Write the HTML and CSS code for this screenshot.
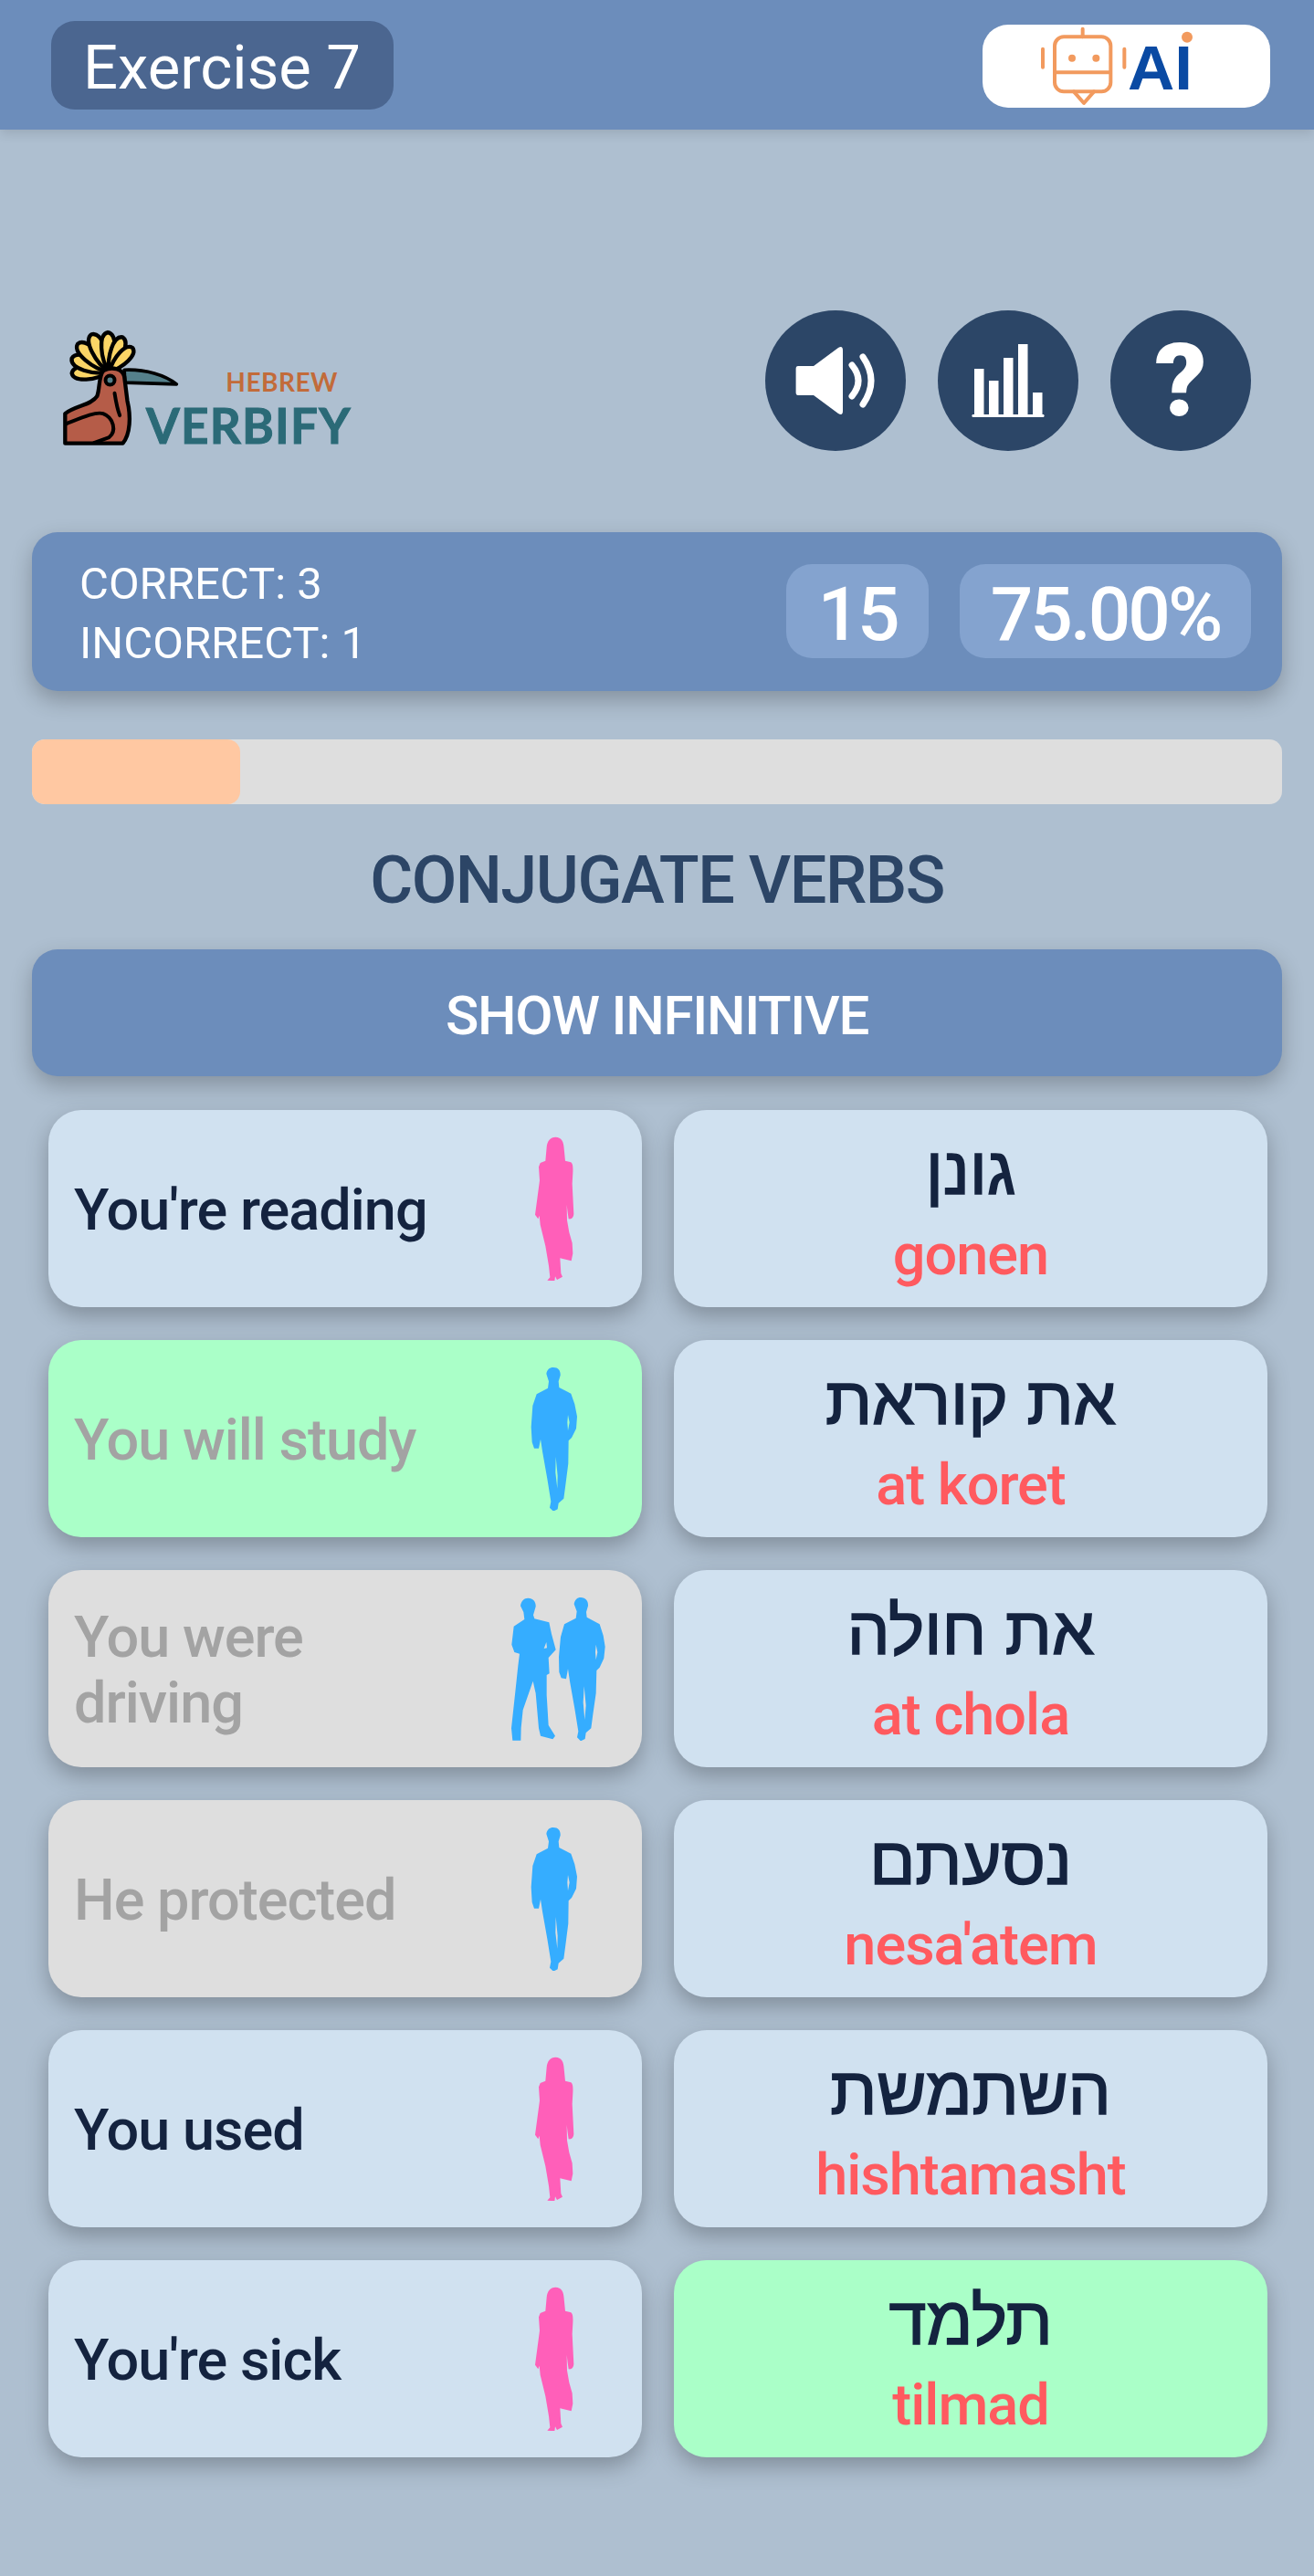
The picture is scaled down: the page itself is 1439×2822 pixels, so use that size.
FILE: index.html
```html
<!DOCTYPE html>
<html lang="en">
<head>
<meta charset="utf-8">
<title>Exercise 7</title>
<link rel="stylesheet" href="styles.css">
</head>
<body>
<svg class="defs" aria-hidden="true">
  <symbol id="woman" viewBox="96 105 360 474">
    <path d="M265 107C285 107 292 122 293 145L297 185L316 190C322 195 323 205 322 225L320 260L322 300L325 360C324 372 318 378 308 376L305 355L302 330L303 380L310 420L320 455L322 490L317 514L280 505L283 555L288 566L270 576L264 565L262 580L238 578L247 568L243 530L232 465L215 395L212 365L208 376L198 362L205 310L213 250L210 205L215 192L232 185L236 140C238 120 248 107 265 107Z"/>
  </symbol>
  <symbol id="man" viewBox="96 81 360 474">
    <path fill-rule="evenodd" d="M258 84C275 84 282 95 281 110L275 130L277 150L316 170L328 205L336 245L333 285L318 315L308 325L307 400L298 470L292 515L275 530L272 550L258 557L246 545L250 525L238 450L222 360L216 320L210 350L195 350L188 330L185 280L190 210L203 172L240 152L243 130L235 105C237 92 245 84 258 84ZM266 378L272 440L271 482L265 430ZM306 240L304 265L306 292L311 265Z"/>
  </symbol>
  <symbol id="men" viewBox="66 57 360 474">
    <path fill-rule="evenodd" d="M145 62C162 62 171 74 170 90L162 118L166 130L214 142L222 180L236 232L212 258L215 310L206 315L206 380L212 480L234 515L226 526L186 515L180 490L170 375L161 335L128 430L122 488L121 530L94 530L90 490L103 370L112 285L117 245L100 240L91 215L98 155L133 132L130 108L120 88C122 72 132 62 145 62ZM205 207L197 228L207 226Z"/>
    <path fill-rule="evenodd" d="M318 60C335 60 343 72 342 88L336 108L338 125L380 148L392 185L398 222L394 260L380 290L370 300L368 375L358 445L352 490L335 505L332 525L318 532L306 520L310 500L298 425L282 335L276 295L270 328L254 325L247 305L246 255L252 190L264 148L302 128L305 106L296 82C298 68 306 60 318 60ZM329 352L335 415L331 462L326 405ZM368 215L366 240L368 265L373 240Z"/>
  </symbol>
</svg>

<header class="topbar">
  <div class="exercise">Exercise 7</div>
  <div class="ai-pill">
    <svg class="ai-logo" viewBox="0 0 945 273" aria-label="AI">
      <g class="robot">
        <rect x="237" y="40" width="184" height="180" rx="30"/>
        <path d="M239 157H419M329 40V14M198 80V140M466 80V140M300 220L333 258L366 220"/>
      </g>
      <circle class="orange" cx="294" cy="110" r="12"/>
      <circle class="orange" cx="373" cy="110" r="12"/>
      <circle class="orange" cx="672" cy="41" r="18"/>
      <text class="ai-text" x="477" y="212" textLength="213" lengthAdjust="spacingAndGlyphs">AI</text>
    </svg>
  </div>
</header>

<section class="tools">
  <div class="logo">
    <svg class="bird" viewBox="85 95 385 385" aria-hidden="true">
      <g class="crest">
        <path transform="rotate(-92 240 235)" d="M240 235C212 190 210 118 240 112C270 118 268 190 240 235Z"/>
        <path transform="rotate(-70 240 235)" d="M240 235C212 190 206 110 240 104C274 110 268 190 240 235Z"/>
        <path transform="rotate(-48 240 235)" d="M240 235C212 190 206 102 240 96C274 102 268 190 240 235Z"/>
        <path transform="rotate(-25 240 235)" d="M240 235C212 190 206 104 240 98C274 104 268 190 240 235Z"/>
        <path transform="rotate(-2 240 235)" d="M240 235C212 190 208 110 240 104C272 110 268 190 240 235Z"/>
        <path transform="rotate(21 240 235)" d="M240 235C214 190 210 118 240 112C270 118 266 190 240 235Z"/>
        <path transform="rotate(44 240 235)" d="M240 235C216 190 212 130 240 124C268 130 264 190 240 235Z"/>
      </g>
      <path class="beak" d="M290 228C360 225 425 245 462 275L292 270Z"/>
      <path class="body" d="M222 230C250 215 285 225 290 250L300 330C312 380 310 440 285 470L95 470L95 372C130 345 180 345 200 315C210 290 205 245 222 230Z"/>
      <path class="wing" d="M100 405C150 385 195 365 220 372C255 385 265 430 240 450L190 468M258 305C262 330 268 360 275 378"/>
      <circle class="eye" cx="243" cy="262" r="15"/>
    </svg>
    <div class="wordmark">
      <div class="hebrew">HEBREW</div>
      <div class="verbify">VERBIFY</div>
    </div>
  </div>
  <div class="round-buttons">
    <button class="round">
      <svg viewBox="0 0 154 154" aria-label="Sound">
        <path class="solid" d="M36 61H53L80 41Q85 38 85 44V110Q85 116 80 113L53 93H36Q33.6 93 33.6 90V64Q33.6 61 36 61Z"/>
        <path class="waves" d="M95 60Q109 77 95 94M107 51Q125 77 107 103"/>
      </svg>
    </button>
    <button class="round">
      <svg viewBox="0 0 154 154" aria-label="Statistics">
        <path class="solid" d="M40 64H50.500V114H40ZM56 77H66.500V114H56ZM72 52H82.500V114H72ZM88 37H98.500V114H88ZM104 90H114.500V114H104ZM38 114H116Q117.500 115.500 116 117H38Q36.500 115.500 38 114Z"/>
      </svg>
    </button>
    <button class="round question">?</button>
  </div>
</section>

<section class="score">
  <div class="tally">
    <div>CORRECT: 3</div>
    <div>INCORRECT: 1</div>
  </div>
  <div class="stat stat-count">15</div>
  <div class="stat stat-percent">75.00%</div>
</section>

<div class="progress"><div class="progress-fill" style="width:16.67%"></div></div>

<h1 class="title">CONJUGATE VERBS</h1>

<button class="show">SHOW INFINITIVE</button>

<main class="grid">
  <div class="card"><span class="label">You're reading</span><svg class="figure woman"><use href="#woman"/></svg></div>
  <div class="card verb"><div class="he" dir="rtl" lang="he">גונן</div><div class="tr">gonen</div></div>

  <div class="card matched"><span class="label muted">You will study</span><svg class="figure man"><use href="#man"/></svg></div>
  <div class="card verb"><div class="he" dir="rtl" lang="he">את קוראת</div><div class="tr">at koret</div></div>

  <div class="card done"><span class="label muted">You were driving</span><svg class="figure man"><use href="#men"/></svg></div>
  <div class="card verb"><div class="he" dir="rtl" lang="he">את חולה</div><div class="tr">at chola</div></div>

  <div class="card done"><span class="label muted">He protected</span><svg class="figure man"><use href="#man"/></svg></div>
  <div class="card verb"><div class="he" dir="rtl" lang="he">נסעתם</div><div class="tr">nesa'atem</div></div>

  <div class="card"><span class="label">You used</span><svg class="figure woman"><use href="#woman"/></svg></div>
  <div class="card verb"><div class="he" dir="rtl" lang="he">השתמשת</div><div class="tr">hishtamasht</div></div>

  <div class="card"><span class="label">You're sick</span><svg class="figure woman"><use href="#woman"/></svg></div>
  <div class="card verb matched"><div class="he" dir="rtl" lang="he">תלמד</div><div class="tr">tilmad</div></div>
</main>
</body>
</html>
```
FILE: styles.css
```css
* { box-sizing: border-box; }
html, body { margin: 0; padding: 0; }
body {
  height: 2822px;
  background: #aebfd0;
  font-family: Roboto, "Liberation Sans", sans-serif;
  overflow: hidden;
}
.defs { width: 0; height: 0; display: block; }

.topbar {
  height: 142px;
  background: #6c8dbb;
  display: flex;
  align-items: center;
  justify-content: space-between;
  padding: 0 48px 0 56px;
  box-shadow: 0 4px 12px rgba(0, 0, 0, .12);
}
.exercise {
  width: 375px;
  height: 97px;
  margin-top: 1px;
  background: #4b6690;
  border-radius: 26px;
  color: #fff;
  font-size: 67px;
  line-height: 103px;
  padding-left: 35px;
  white-space: nowrap;
}
.ai-pill {
  width: 315px;
  height: 91px;
  margin-top: 3px;
  background: #fff;
  border-radius: 28px;
}
.ai-logo { width: 315px; height: 91px; display: block; }
.robot { fill: none; stroke: #f29a5e; stroke-width: 12; stroke-linecap: round; stroke-linejoin: round; }
.orange { fill: #f29a5e; }
.ai-text { font-family: "Liberation Sans", sans-serif; font-weight: 700; font-size: 204px; fill: #0a4aa3; }

.tools {
  margin-top: 198px;
  height: 154px;
  display: flex;
  justify-content: space-between;
  padding: 0 69px 0 68px;
}
.logo { display: flex; align-items: flex-start; position: relative; width: 320px; }
.bird { width: 128px; height: 128px; margin-top: 21px; flex: none; }
.crest path { fill: #fbd566; stroke: #000; stroke-width: 13; stroke-linejoin: round; }
.beak { fill: #55808b; stroke: #000; stroke-width: 11; stroke-linejoin: round; }
.body { fill: #b55c48; stroke: #000; stroke-width: 13; stroke-linejoin: round; }
.wing { fill: none; stroke: #000; stroke-width: 12; stroke-linecap: round; stroke-linejoin: round; }
.eye { fill: #55808b; stroke: #000; stroke-width: 12; }
.wordmark { margin-left: -36px; padding-top: 64px; width: 226px; font-family: Lato, sans-serif; }
.hebrew { color: #c26b3a; font-size: 28px; line-height: 28px; font-weight: 700; text-align: right; padding-right: 16px; letter-spacing: .5px; }
.verbify { color: #2b6a77; font-size: 53px; line-height: 50px; margin-top: 9px; font-weight: 700; letter-spacing: 1.2px; -webkit-text-stroke: 1px #2b6a77; white-space: nowrap; }
.round-buttons { display: flex; gap: 35px; }
.round {
  width: 154px;
  height: 154px;
  border: 0;
  padding: 0;
  border-radius: 50%;
  background: #2c4667;
  display: flex;
  align-items: center;
  justify-content: center;
  color: #fff;
}
.round svg { width: 154px; height: 154px; display: block; }
.solid { fill: #fff; }
.waves { fill: none; stroke: #fff; stroke-width: 7; stroke-linecap: round; }
.question { font-family: Roboto, sans-serif; font-weight: 900; font-size: 112px; line-height: 154px; }

.score {
  margin: 89px 35px 0;
  height: 174px;
  background: #6c8dbb;
  border-radius: 28px;
  display: flex;
  align-items: center;
  padding: 0 34px 0 52px;
  box-shadow: 0 10px 24px rgba(0, 0, 0, .24);
  color: #fff;
}
.tally { flex: 1; font-size: 49px; line-height: 65px; padding-top: 4px; }
.stat {
  height: 103px;
  margin-top: -2px;
  background: #84a3cf;
  border-radius: 28px;
  font-size: 82px;
  font-weight: 500;
  line-height: 110px;
  text-align: center;
  letter-spacing: -3px;
}
.stat-count { width: 156px; }
.stat-percent { width: 319px; margin-left: 34px; }

.progress {
  margin: 53px 35px 0;
  height: 71px;
  background: #dedede;
  border-radius: 14px;
  overflow: hidden;
}
.progress-fill { height: 100%; background: #ffc8a2; border-radius: 14px; }

.title {
  margin: 0;
  height: 159px;
  color: #2c4566;
  font-size: 72px;
  font-weight: 500;
  line-height: 168px;
  text-align: center;
  letter-spacing: -1.5px;
}

.show {
  display: block;
  width: 1369px;
  height: 139px;
  margin: 0 35px;
  padding: 6px 0 0;
  border: 0;
  border-radius: 28px;
  background: #6c8dbb;
  color: #fff;
  font-family: Roboto, sans-serif;
  font-size: 60px;
  font-weight: 500;
  letter-spacing: -1.3px;
  box-shadow: 0 10px 24px rgba(0, 0, 0, .24);
}

.grid {
  margin: 37px 0 0 53px;
  width: 1335px;
  display: grid;
  grid-template-columns: 650px 650px;
  grid-auto-rows: 216px;
  column-gap: 35px;
  row-gap: 36px;
}
.card {
  background: #d0e1f0;
  border-radius: 36px;
  display: flex;
  align-items: center;
  justify-content: space-between;
  padding: 4px 31px 0 28px;
  box-shadow: 0 10px 24px rgba(0, 0, 0, .26);
}
.card.matched { background: #aaffc8; }
.card.done { background: #dedede; }
.label { color: #14233f; font-size: 63px; line-height: 72px; font-weight: 500; letter-spacing: -1px; max-width: 400px; }
.label.muted { color: #a3a3a3; }
.figure { width: 120px; height: 158px; flex: none; margin-top: -4px; }
.woman { fill: #ff5fb9; }
.man { fill: #35adff; }
.verb { flex-direction: column; justify-content: center; padding: 7px 0 0; }
.he { color: #14233f; font-family: "Liberation Sans", sans-serif; font-size: 74px; line-height: 92px; font-weight: 400; -webkit-text-stroke: 1.6px #14233f; margin-top: -8px; }
.tr { color: #ff5a5f; font-size: 63px; line-height: 72px; font-weight: 500; letter-spacing: -1px; margin-top: 10px; }
```
